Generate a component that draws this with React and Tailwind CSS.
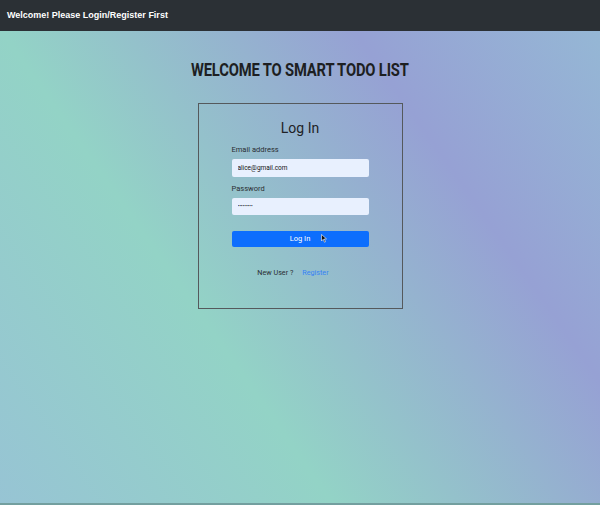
export default function App() {
  return (
    <div className="w-[600px] h-[505px] flex flex-col overflow-hidden bg-[linear-gradient(55deg,#97c4d4_0%,#93d3c6_35%,#96a1d4_72%,#95b9d5_100%)] font-['Roboto','Liberation_Sans',sans-serif]">
      {/* top bar */}
      <nav className="h-[31px] shrink-0 bg-[#2b3035] flex items-center px-[7px]">
        <span className="text-white font-bold text-[9px] font-['Liberation_Sans','Roboto',sans-serif]">Welcome! Please Login/Register First</span>
      </nav>

      <main className="flex-1 flex flex-col items-center">
        <h1 className="mt-[29px] text-[#1d1f22] text-[18px] font-bold leading-[20px] scale-x-[0.82] tracking-[-0.2px]">
          WELCOME TO SMART TODO LIST
        </h1>

        <div className="mt-[23px] w-[205px] h-[206px] border border-[#55595c] flex flex-col items-center pt-[14px]">
          <h2 className="text-[14px] leading-[20px] text-[#1f2226]">Log In</h2>

          <form className="w-[137px] mt-[7px] flex flex-col" onSubmit={(e) => e.preventDefault()}>
            <label className="text-[7.5px] leading-[10px] text-[#2a2d31]">Email address</label>
            <input
              readOnly
              value="alice@gmail.com"
              className="mt-[4px] h-[17.5px] rounded-[2px] bg-[#e8f0fe] px-[6px] text-[6.5px] text-[#111] outline-none"
            />
            <label className="mt-[7px] text-[7.5px] leading-[10px] text-[#2a2d31]">Password</label>
            <input
              readOnly
              type="password"
              value="password1"
              className="mt-[4px] h-[17.5px] rounded-[2px] bg-[#e8f0fe] px-[6px] text-[5px] text-[#111] outline-none"
            />
            <div className="relative mt-[16px]">
              <button className="block w-full h-[16px] rounded-[2px] bg-[#0d6efd] text-white text-[7.5px] leading-[16px]">
                Log In
              </button>
              <svg className="absolute left-[89px] top-[3px]" width="6" height="9" viewBox="0 0 12 18">
                <path d="M1 1 L1 14 L4.5 10.5 L7 16.5 L9 15.5 L6.5 9.8 L11 9.8 Z" fill="#111" stroke="#fff" strokeWidth="1.2" />
              </svg>
            </div>
          </form>

          <div className="mt-[21px] mr-[14px] flex items-center text-[7.2px] leading-[10px]">
            <span className="text-[#2a2d31]">New User ?</span>
            <a href="#" className="ml-[9px] text-[#3582f5]">Register</a>
          </div>
        </div>
      </main>
      <div className="h-[2px] shrink-0 bg-[#739f9f]" />
    </div>
  );
}
